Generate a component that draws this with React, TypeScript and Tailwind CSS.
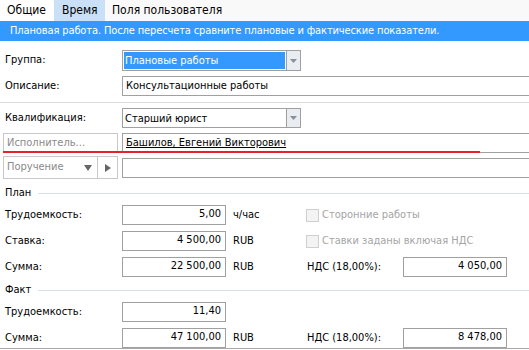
import React from 'react'

const font = { fontFamily: '"DejaVu Sans Condensed", "Liberation Sans", Arial, sans-serif' }

function DropArrow() {
  return (
    <svg width="7" height="4" viewBox="0 0 7 4">
      <path d="M0 0 H7 L3.5 4 Z" fill="#8a8f96" />
    </svg>
  )
}

function Combo({ value, selected }: { value: string; selected?: boolean }) {
  return (
    <div className="flex h-full w-[179px]">
      <div className="flex-1 border border-[#a0a0a0] bg-white p-px">
        <div
          className={
            selected
              ? 'h-full bg-[#3399ff] pl-px text-white leading-[17px]'
              : 'h-full pl-px text-black leading-[17px]'
          }
        >
          {value}
        </div>
      </div>
      <div className="w-[14px] border border-l-0 border-[#a0a0a0] bg-[#e9ecf0] flex items-center justify-center">
        <DropArrow />
      </div>
    </div>
  )
}

function NumField({ value }: { value: string }) {
  return (
    <div className="h-full w-[104px] border border-[#a0a0a0] bg-white text-right pr-[4px] leading-[16px]">
      {value}
    </div>
  )
}

function Check({ label }: { label: string }) {
  return (
    <div className="flex items-center gap-[3px] text-[#a5a5a5]">
      <div className="w-[13px] h-[13px] border border-[#cfcfcf] bg-[#f3f3f3]" />
      {label}
    </div>
  )
}

function Header({ title }: { title: string }) {
  return (
    <div className="flex items-center h-[14px] pl-[5px]">
      <span className="pr-[7px]">{title}</span>
      <div className="flex-1 h-px bg-[#d9e1e7]" />
    </div>
  )
}

function Row({ label, children, className }: { label: string; children: React.ReactNode; className?: string }) {
  return (
    <div className={'flex items-center h-[20px] ' + (className ?? '')}>
      <div className="w-[122px] pl-[5px] shrink-0">{label}</div>
      {children}
    </div>
  )
}

export default function App() {
  return (
    <div className="w-[529px] h-[350px] overflow-hidden bg-white text-[11px] text-black relative" style={font}>
      {/* Tabs */}
      <div className="flex h-[21px] bg-[#f9f9f9] text-[12px]">
        <div className="w-[54px] pl-[7px] bg-white leading-[21px]">Общие</div>
        <div className="w-[51px] pl-[8px] bg-[#c9e0f7] leading-[21px]">Время</div>
        <div className="pl-[7px] leading-[21px]">Поля пользователя</div>
      </div>

      {/* Info bar */}
      <div className="h-[20px] bg-[#3399ff] text-white pl-[10px] leading-[20px] tracking-[-0.12px]">
        Плановая работа. После пересчета сравните плановые и фактические показатели.
      </div>

      <div className="pt-[9px]">
        <div className="flex items-center h-[21px]">
          <div className="w-[122px] pl-[5px] shrink-0">Группа:</div>
          <Combo value="Плановые работы" selected />
        </div>

        <Row label="Описание:" className="mt-[5px]">
          <div className="flex-1 h-full border-y border-l border-[#a0a0a0] pl-[3px] leading-[18px]">
            Консультационные работы
          </div>
        </Row>

        <div className="mt-[6px] h-px bg-[#dcdcdc]" />

        <Row label="Квалификация:" className="mt-[5px]">
          <Combo value="Старший юрист" />
        </Row>

        <div className="flex items-center h-[20px] mt-[5px]">
          <div className="ml-[3px] w-[115px] h-full border border-[#c8c8c8] pl-[3px] text-[#8a8a8a] leading-[17px]">
            Исполнитель...
          </div>
          <div className="ml-[4px] flex-1 h-full border-y border-l border-[#a0a0a0] pl-[3px] leading-[17px]">
            <span className="underline">Башилов, Евгений Викторович</span>
          </div>
        </div>

        <div className="flex h-[23px] mt-[3px]">
          <div className="ml-[3px] flex w-[115px] h-full border border-[#c8c8c8] text-[#8a8a8a]">
            <div className="flex-1 flex items-center justify-between pl-[3px] pr-[5px]">
              Поручение
              <svg width="8" height="6" viewBox="0 0 8 6">
                <path d="M0 0 H8 L4 6 Z" fill="#666" />
              </svg>
            </div>
            <div className="w-[20px] border-l border-[#c8c8c8] flex items-center justify-center">
              <svg width="6" height="8" viewBox="0 0 6 8">
                <path d="M0 0 V8 L6 4 Z" fill="#666" />
              </svg>
            </div>
          </div>
          <div className="ml-[4px] mt-[2px] flex-1 h-[20px] border-y border-l border-[#a0a0a0]" />
        </div>

        <div className="mt-[7px]">
          <Header title="План" />
        </div>

        <Row label="Трудоемкость:" className="mt-[5px]">
          <NumField value="5,00" />
          <div className="w-[80px] pl-[7px]">ч/час</div>
          <Check label="Сторонние работы" />
        </Row>
        <Row label="Ставка:" className="mt-[6px]">
          <NumField value="4 500,00" />
          <div className="w-[80px] pl-[7px]">RUB</div>
          <Check label="Ставки заданы включая НДС" />
        </Row>
        <Row label="Сумма:" className="mt-[6px]">
          <NumField value="22 500,00" />
          <div className="w-[80px] pl-[7px]">RUB</div>
          <div className="w-[97px] pl-px">НДС (18,00%):</div>
          <NumField value="4 050,00" />
        </Row>

        <div className="mt-[6px]">
          <Header title="Факт" />
        </div>

        <Row label="Трудоемкость:" className="mt-[5px]">
          <NumField value="11,40" />
        </Row>
        <Row label="Сумма:" className="mt-[6px]">
          <NumField value="47 100,00" />
          <div className="w-[80px] pl-[7px]">RUB</div>
          <div className="w-[97px] pl-px">НДС (18,00%):</div>
          <NumField value="8 478,00" />
        </Row>
        <div className="h-px bg-[#a8a8a8]" />
      </div>

      {/* annotation line */}
      <div className="absolute left-[3px] top-[151px] w-[477px] h-[2px] bg-[#e8202a]" />
    </div>
  )
}
